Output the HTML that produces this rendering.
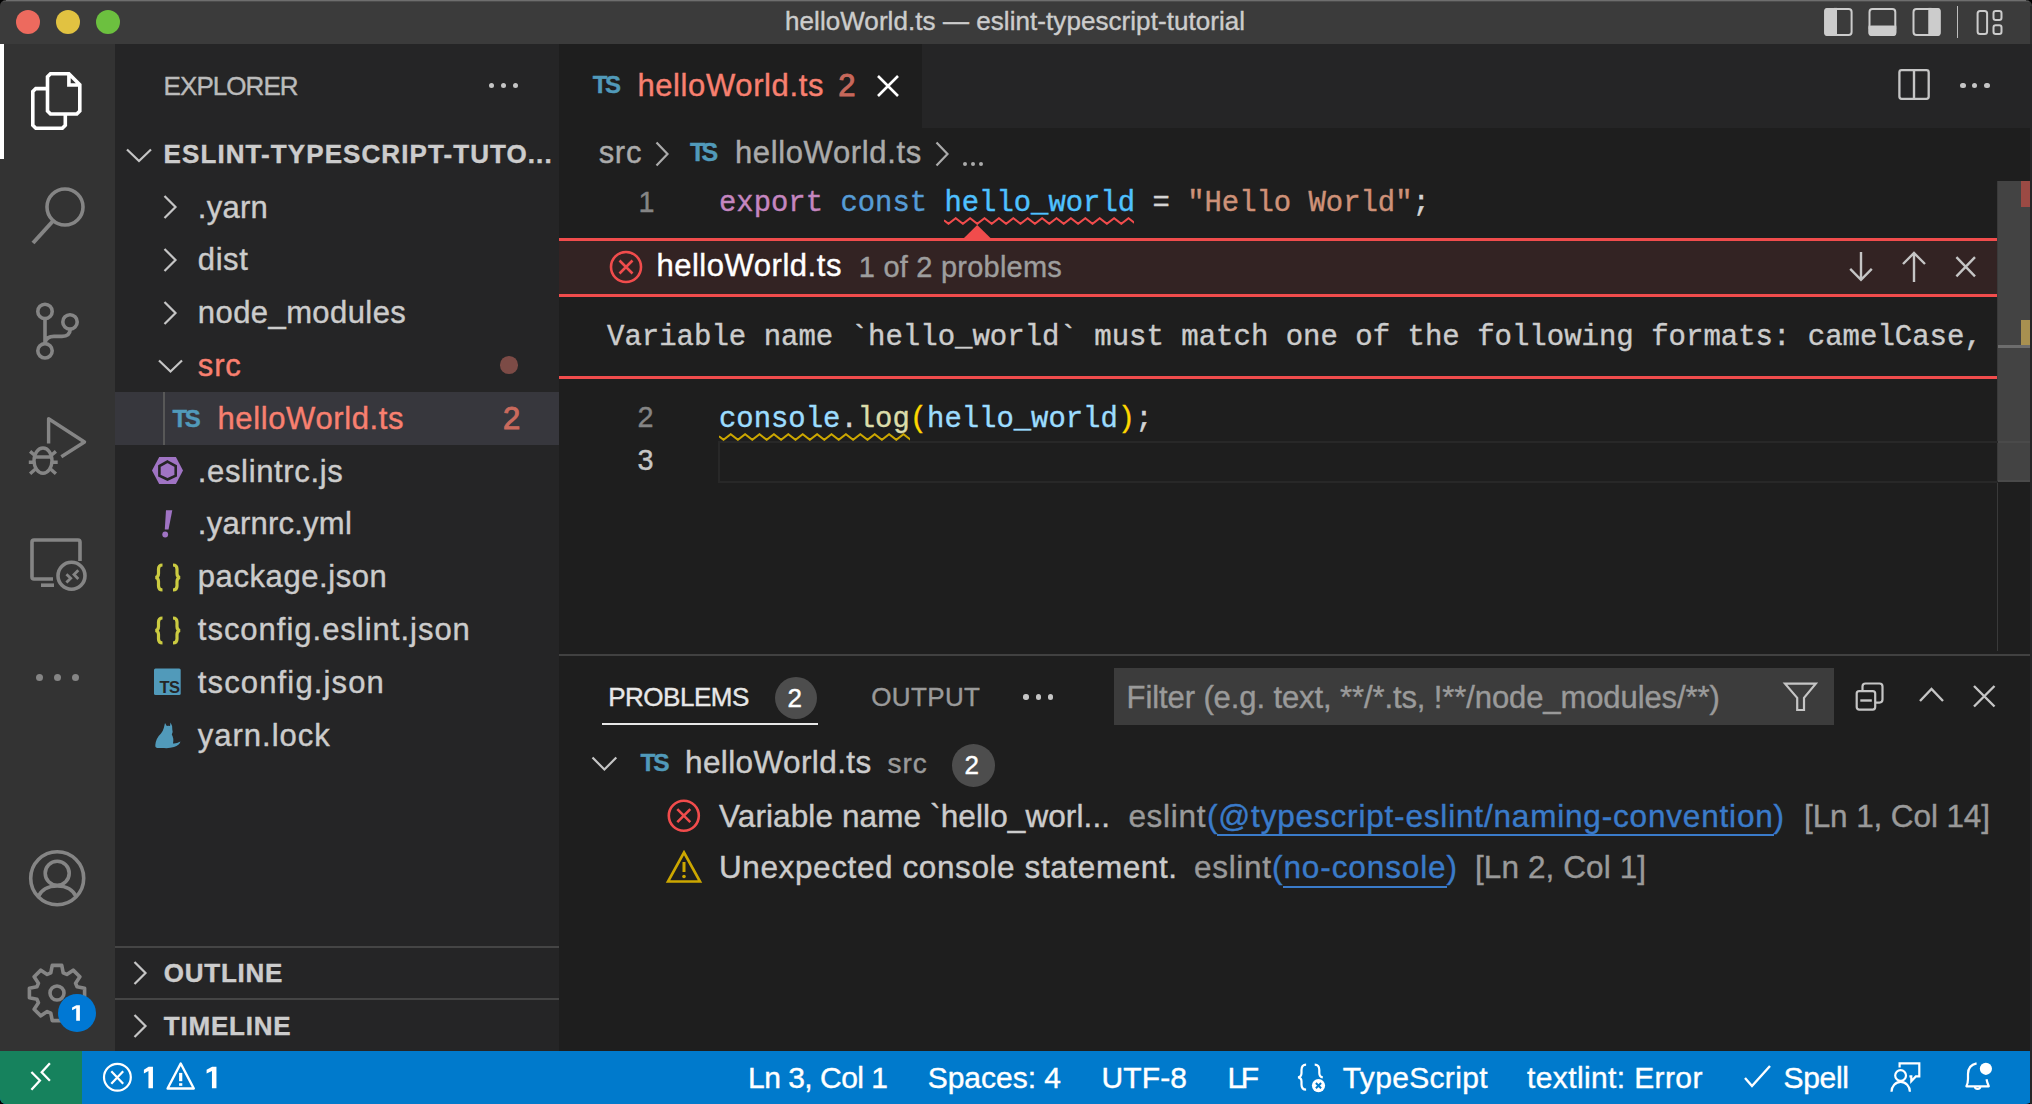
<!DOCTYPE html>
<html><head><meta charset="utf-8"><title>VS Code</title>
<style>
html,body{margin:0;padding:0;width:2032px;height:1104px;overflow:hidden;background:#000;}
body{position:relative;font-family:"Liberation Sans", sans-serif;}
.t{position:absolute;white-space:pre;-webkit-text-stroke:0.4px currentColor;}
.r{position:absolute;display:block;}
</style></head><body>
<div class="r" style="left:0px;top:0px;width:2032px;height:1104px;background:#1e1e1e;border-radius:6px;"></div>
<div class="r" style="left:0px;top:0px;width:2032px;height:44px;background:#3b3b3b;border-radius:6px 6px 0 0;"></div>
<div class="r" style="left:6px;top:0px;width:2020px;height:1px;background:#6e6e6e;"></div>
<div class="r" style="left:3px;top:1px;width:2026px;height:1px;background:#4c4c4c;"></div>
<div class="r" style="left:0px;top:44px;width:115px;height:1007px;background:#333333;"></div>
<div class="r" style="left:115px;top:44px;width:444px;height:1007px;background:#252526;"></div>
<div class="r" style="left:559px;top:44px;width:1473px;height:84px;background:#252526;"></div>
<div class="r" style="left:559px;top:44px;width:363px;height:84px;background:#1e1e1e;"></div>
<div class="r" style="left:0px;top:1051px;width:2032px;height:53px;background:#007acc;border-radius:0 0 6px 6px;"></div>
<div class="r" style="left:0px;top:1051px;width:82px;height:53px;background:#16825d;border-radius:0 0 0 6px;"></div>
<div class="r" style="left:2030px;top:44px;width:2px;height:1060px;background:#262626;"></div>
<div class="r" style="left:2030px;top:6px;width:2px;height:38px;background:#2c2c2c;"></div>
<div class="r" style="left:15.8px;top:9.8px;width:24.4px;height:24.4px;border-radius:50%;background:#ed6a5e"></div>
<div class="r" style="left:55.8px;top:9.8px;width:24.4px;height:24.4px;border-radius:50%;background:#e1c241"></div>
<div class="r" style="left:95.8px;top:9.8px;width:24.4px;height:24.4px;border-radius:50%;background:#6cc03f"></div>
<div class="t" style="left:785.00px;top:7.46px;font-size:26px;line-height:29.05px;color:#cccccc;letter-spacing:0.062px;">helloWorld.ts — eslint-typescript-tutorial</div>
<svg class="r" style="left:1822px;top:6px" width="34" height="34" viewBox="0 0 34 34"><rect x="3.2" y="2.9" width="26.4" height="26.1" rx="3" fill="none" stroke="#cccccc" stroke-width="2"/><rect x="2.2" y="1.9" width="12" height="28.1" rx="3" fill="#cccccc"/><rect x="12" y="1.9" width="3" height="28.1" fill="#cccccc"/></svg>
<svg class="r" style="left:1866px;top:6px" width="34" height="34" viewBox="0 0 34 34"><rect x="3.5" y="2.9" width="25.8" height="26.1" rx="3" fill="none" stroke="#cccccc" stroke-width="2"/><rect x="2.5" y="19.7" width="27.8" height="10.3" rx="3" fill="#cccccc"/><rect x="2.5" y="19.7" width="27.8" height="3" fill="#cccccc"/></svg>
<svg class="r" style="left:1910px;top:6px" width="34" height="34" viewBox="0 0 34 34"><rect x="3.5" y="2.9" width="26.1" height="26.1" rx="3" fill="none" stroke="#cccccc" stroke-width="2"/><rect x="18.5" y="1.9" width="12.1" height="28.1" rx="3" fill="#cccccc"/><rect x="18.5" y="1.9" width="3" height="28.1" fill="#cccccc"/></svg>
<div class="r" style="left:1956.8px;top:6px;width:1.5px;height:32px;background:#bdbdbd;"></div>
<svg class="r" style="left:1972px;top:6px" width="34" height="34" viewBox="0 0 34 34"><rect x="5.6" y="5" width="9.5" height="22.9" rx="2.5" fill="none" stroke="#cccccc" stroke-width="2"/><rect x="21.5" y="5" width="8" height="8.9" rx="2.2" fill="none" stroke="#cccccc" stroke-width="2"/><rect x="21.5" y="19.3" width="8" height="8.6" rx="2.2" fill="none" stroke="#cccccc" stroke-width="2"/></svg>
<div class="r" style="left:0px;top:44px;width:4px;height:115px;background:#ffffff;"></div>
<svg class="r" style="left:26px;top:66px" width="62" height="70" viewBox="0 0 62 70"><path d="M21.5 10.8 L24.5 7.8 H42.9 L53.8 18.7 V45 L50.8 48 H24.5 L21.5 45 Z M42.9 7.8 V19 H53.8" fill="none" stroke="#fff" stroke-width="3.6"/><path d="M21.5 22.6 H9.8 L6.8 25.6 V59.2 L9.8 62.2 H36.3 L39.3 59.2 V48" fill="none" stroke="#fff" stroke-width="3.6"/></svg>
<svg class="r" style="left:26px;top:180px" width="62" height="70" viewBox="0 0 62 70"><circle cx="39" cy="27" r="18" fill="none" stroke="#858585" stroke-width="3.6"/><path d="M27 41 L7 63" stroke="#858585" stroke-width="4"/></svg>
<svg class="r" style="left:26px;top:290px" width="62" height="72" viewBox="0 0 62 72"><circle cx="19" cy="21.4" r="7.2" fill="none" stroke="#858585" stroke-width="3.6"/><circle cx="19" cy="60.8" r="7.2" fill="none" stroke="#858585" stroke-width="3.6"/><circle cx="44" cy="31.9" r="7.2" fill="none" stroke="#858585" stroke-width="3.6"/><path d="M19 28.6 V54 M19 52.5 Q20.5 46.4 28 46.4 H36 Q44 46.4 44.3 39" fill="none" stroke="#858585" stroke-width="3.6"/></svg>
<svg class="r" style="left:26px;top:410px" width="62" height="70" viewBox="0 0 62 70"><path d="M22.6 33.4 V8.8 L58.5 32 L35.3 46.8" fill="none" stroke="#858585" stroke-width="3.4" stroke-linejoin="round"/><ellipse cx="17" cy="50.6" rx="9" ry="12.6" fill="none" stroke="#858585" stroke-width="3.4"/><path d="M8.5 47 H25.5 M4.1 41.4 L9.5 46 M29.9 41.4 L24.5 46 M2.8 52.2 H8 M26 52.2 H31.7 M4.1 63.8 L9.5 59 M29.9 63.8 L24.5 59" stroke="#858585" stroke-width="3.4" fill="none"/></svg>
<svg class="r" style="left:26px;top:530px" width="62" height="66" viewBox="0 0 62 66"><path d="M54 31 V12 q0 -2 -2 -2 H8 q-2 0 -2 2 V47 q0 2 2 2 H27" fill="none" stroke="#858585" stroke-width="3.6"/><path d="M15 55.2 H28" stroke="#858585" stroke-width="3.6"/><circle cx="45.5" cy="45.8" r="13.5" fill="none" stroke="#858585" stroke-width="3.6"/><path d="M40.4 44.3 L44.7 48.3 L40.4 52.6 M52.3 40.3 L48 44.6 L52.3 49" fill="none" stroke="#858585" stroke-width="2.8"/></svg>
<div class="r" style="left:35.5px;top:673.9px;width:7.4px;height:7.4px;border-radius:50%;background:#858585"></div>
<div class="r" style="left:53.699999999999996px;top:673.9px;width:7.4px;height:7.4px;border-radius:50%;background:#858585"></div>
<div class="r" style="left:71.8px;top:673.9px;width:7.4px;height:7.4px;border-radius:50%;background:#858585"></div>
<svg class="r" style="left:26px;top:846px" width="64" height="64" viewBox="0 0 64 64"><circle cx="31.2" cy="32.3" r="26.5" fill="none" stroke="#858585" stroke-width="3.6"/><circle cx="31.2" cy="27.3" r="12" fill="none" stroke="#858585" stroke-width="3.6"/><path d="M12 51 q5 -11 19.2 -11 q14.2 0 19.2 11" fill="none" stroke="#858585" stroke-width="3.6"/></svg>
<svg class="r" style="left:25px;top:961px" width="64" height="64" viewBox="0 0 64 64"><path d="M52.06 25.79 L59.60 27.26 L59.60 36.74 L52.06 38.21 L50.57 41.80 L54.86 48.16 L48.16 54.86 L41.80 50.57 L38.21 52.06 L36.74 59.60 L27.26 59.60 L25.79 52.06 L22.20 50.57 L15.84 54.86 L9.14 48.16 L13.43 41.80 L11.94 38.21 L4.40 36.74 L4.40 27.26 L11.94 25.79 L13.43 22.20 L9.14 15.84 L15.84 9.14 L22.20 13.43 L25.79 11.94 L27.26 4.40 L36.74 4.40 L38.21 11.94 L41.80 13.43 L48.16 9.14 L54.86 15.84 L50.57 22.20 Z" fill="none" stroke="#858585" stroke-width="3.6" stroke-linejoin="round"/><circle cx="32" cy="32" r="7" fill="none" stroke="#858585" stroke-width="3.6"/></svg>
<div class="r" style="left:58px;top:994px;width:38px;height:38px;border-radius:50%;background:#0078d4"></div>
<svg class="r" style="left:69px;top:1002px" width="14" height="22" viewBox="0 0 14 22"><path d="M10.899999999999991 3.2999999999999545 H7.400000000000003 L3.0999999999999943 5.4699999999999545 V8.197999999999954 L7.200000000000003 6.244999999999955 V18.799999999999955 H10.899999999999991 Z" fill="#ffffff"/></svg>
<div class="t" style="left:163.60px;top:72.46px;font-size:26px;line-height:29.05px;color:#bbbbbb;letter-spacing:-0.944px;">EXPLORER</div>
<div class="r" style="left:489.0px;top:82.8px;width:5.4px;height:5.4px;border-radius:50%;background:#c5c5c5"></div>
<div class="r" style="left:501.0px;top:82.8px;width:5.4px;height:5.4px;border-radius:50%;background:#c5c5c5"></div>
<div class="r" style="left:513.0999999999999px;top:82.8px;width:5.4px;height:5.4px;border-radius:50%;background:#c5c5c5"></div>
<svg class="r" style="left:125px;top:147px" width="28" height="18" viewBox="0 0 28 18"><path d="M2 2.5 L14.0 14.0 L26 2.5" fill="none" stroke="#c5c5c5" stroke-width="2.2"/></svg>
<div class="t" style="left:163.60px;top:140.46px;font-size:26px;line-height:29.05px;color:#cccccc;font-weight:700;letter-spacing:1.081px;">ESLINT-TYPESCRIPT-TUTO...</div>
<div class="r" style="left:115px;top:392px;width:444px;height:53px;background:#37373d;"></div>
<div class="r" style="left:163px;top:392px;width:2px;height:53px;background:#585858;"></div>
<svg class="r" style="left:162px;top:194.10000000000002px" width="18" height="27" viewBox="0 0 18 27"><path d="M2.5 2 L13.5 13 L2.5 24" fill="none" stroke="#c5c5c5" stroke-width="2.2"/></svg>
<div class="t" style="left:197.80px;top:190.54px;font-size:31px;line-height:34.63px;color:#cccccc;letter-spacing:0.273px;">.yarn</div>
<svg class="r" style="left:162px;top:246.89999999999998px" width="18" height="27" viewBox="0 0 18 27"><path d="M2.5 2 L13.5 13 L2.5 24" fill="none" stroke="#c5c5c5" stroke-width="2.2"/></svg>
<div class="t" style="left:197.80px;top:243.34px;font-size:31px;line-height:34.63px;color:#cccccc;letter-spacing:0.589px;">dist</div>
<svg class="r" style="left:162px;top:299.7px" width="18" height="27" viewBox="0 0 18 27"><path d="M2.5 2 L13.5 13 L2.5 24" fill="none" stroke="#c5c5c5" stroke-width="2.2"/></svg>
<div class="t" style="left:197.80px;top:296.14px;font-size:31px;line-height:34.63px;color:#cccccc;letter-spacing:0.425px;">node_modules</div>
<svg class="r" style="left:157px;top:358.0px" width="27" height="17" viewBox="0 0 27 17"><path d="M2 2.5 L13.5 13.5 L25 2.5" fill="none" stroke="#c5c5c5" stroke-width="2.2"/></svg>
<div class="t" style="left:197.80px;top:348.94px;font-size:31px;line-height:34.63px;color:#f88070;letter-spacing:0.836px;">src</div>
<div class="r" style="left:500.0px;top:356.2px;width:17.6px;height:17.6px;border-radius:50%;background:#7c4b46"></div>
<div class="t" style="left:172.40px;top:406.07px;font-size:24px;line-height:26.81px;color:#519aba;font-weight:700;letter-spacing:-2.272px;">TS</div>
<div class="t" style="left:217.50px;top:401.74px;font-size:31px;line-height:34.63px;color:#f88070;letter-spacing:0.617px;">helloWorld.ts</div>
<div class="t" style="left:503.00px;top:401.74px;font-size:31px;line-height:34.63px;color:#c96a5d;-webkit-text-stroke:1px currentColor;">2</div>
<div class="t" style="left:197.80px;top:454.54px;font-size:31px;line-height:34.63px;color:#cccccc;letter-spacing:0.655px;">.eslintrc.js</div>
<div class="t" style="left:197.80px;top:507.34px;font-size:31px;line-height:34.63px;color:#cccccc;letter-spacing:0.244px;">.yarnrc.yml</div>
<div class="t" style="left:197.80px;top:560.14px;font-size:31px;line-height:34.63px;color:#cccccc;letter-spacing:0.578px;">package.json</div>
<div class="t" style="left:197.80px;top:612.94px;font-size:31px;line-height:34.63px;color:#cccccc;letter-spacing:0.987px;">tsconfig.eslint.json</div>
<div class="t" style="left:197.80px;top:665.74px;font-size:31px;line-height:34.63px;color:#cccccc;letter-spacing:1.143px;">tsconfig.json</div>
<div class="t" style="left:197.80px;top:718.54px;font-size:31px;line-height:34.63px;color:#cccccc;letter-spacing:0.996px;">yarn.lock</div>
<svg class="r" style="left:150px;top:455px" width="35" height="31" viewBox="0 0 35 31"><path d="M2 15.6 L9.2 2.1 H25.9 L33 15.6 L25.9 29.1 H9.2 Z" fill="#a074c4"/><path d="M17.5 6.6 L25.7 11 V20.7 L17.5 24.5 L9.4 20.7 V11 Z" fill="#a074c4" stroke="#252526" stroke-width="2.6"/></svg>
<svg class="r" style="left:158px;top:508px" width="18" height="32" viewBox="0 0 18 32"><path d="M8 2.3 H14.3 L10.5 21.5 H6.8 Z" fill="#a074c4"/><circle cx="7.2" cy="26.5" r="2.9" fill="#a074c4"/></svg>
<svg class="r" style="left:152px;top:562px" width="32" height="32" viewBox="0 0 32 32"><path d="M10.5 3 Q6.5 3 6.5 7 V11.5 Q6.5 15 3.5 15.5 Q6.5 16 6.5 19.5 V24 Q6.5 28 10.5 28 M21 3 Q25 3 25 7 V11.5 Q25 15 28 15.5 Q25 16 25 19.5 V24 Q25 28 21 28" fill="none" stroke="#cbcb41" stroke-width="3.2"/></svg>
<svg class="r" style="left:152px;top:615px" width="32" height="32" viewBox="0 0 32 32"><path d="M10.5 3 Q6.5 3 6.5 7 V11.5 Q6.5 15 3.5 15.5 Q6.5 16 6.5 19.5 V24 Q6.5 28 10.5 28 M21 3 Q25 3 25 7 V11.5 Q25 15 28 15.5 Q25 16 25 19.5 V24 Q25 28 21 28" fill="none" stroke="#cbcb41" stroke-width="3.2"/></svg>
<svg class="r" style="left:153px;top:667px" width="29" height="29" viewBox="0 0 29 29"><rect x="1" y="1.5" width="26.7" height="26.5" rx="1.5" fill="#519aba"/><text x="6.5" y="25.6" font-family="Liberation Sans" font-weight="700" font-size="16.5" fill="#252526" letter-spacing="-0.6">TS</text></svg>
<svg class="r" style="left:152px;top:720px" width="30" height="30" viewBox="0 0 30 30"><path d="M13 3 L14.8 6 Q16.5 5.4 18 6 L18.5 2.5 Q20.8 6 20.3 9.5 Q21.3 12 19.8 14.5 Q22 18 21 23.5 Q24 24 28.5 21.5 Q27.5 25 22 27 Q17 28.5 12 28 H5 Q2.8 27.5 3.3 25 Q4 18 9 13.5 Q11 11 11.8 8 Z" fill="#519aba"/></svg>
<div class="r" style="left:115px;top:946px;width:444px;height:2px;background:#454545;"></div>
<div class="r" style="left:115px;top:998px;width:444px;height:2px;background:#454545;"></div>
<svg class="r" style="left:132px;top:959.5px" width="18" height="27" viewBox="0 0 18 27"><path d="M2.5 2 L13.5 13 L2.5 24" fill="none" stroke="#c5c5c5" stroke-width="2.2"/></svg>
<div class="t" style="left:163.80px;top:958.96px;font-size:26px;line-height:29.05px;color:#cccccc;font-weight:700;letter-spacing:0.751px;">OUTLINE</div>
<svg class="r" style="left:132px;top:1012.5px" width="18" height="27" viewBox="0 0 18 27"><path d="M2.5 2 L13.5 13 L2.5 24" fill="none" stroke="#c5c5c5" stroke-width="2.2"/></svg>
<div class="t" style="left:163.80px;top:1012.46px;font-size:26px;line-height:29.05px;color:#cccccc;font-weight:700;letter-spacing:0.784px;">TIMELINE</div>
<div class="t" style="left:592.80px;top:72.37px;font-size:24px;line-height:26.81px;color:#519aba;font-weight:700;letter-spacing:-2.372px;">TS</div>
<div class="t" style="left:637.40px;top:69.44px;font-size:31px;line-height:34.63px;color:#f88070;letter-spacing:0.617px;">helloWorld.ts</div>
<div class="t" style="left:838.20px;top:69.44px;font-size:31px;line-height:34.63px;color:#c7685b;-webkit-text-stroke:1px currentColor;">2</div>
<svg class="r" style="left:874px;top:72px" width="28" height="28" viewBox="0 0 28 28"><path d="M4 4 L24 24 M24 4 L4 24" stroke="#ffffff" stroke-width="2.6"/></svg>
<svg class="r" style="left:1896px;top:66px" width="36" height="37" viewBox="0 0 36 37"><rect x="3.4" y="4.2" width="29.3" height="28.6" rx="2.2" fill="none" stroke="#c5c5c5" stroke-width="2.3"/><path d="M18 4.2 V32.8" stroke="#c5c5c5" stroke-width="2.4"/></svg>
<div class="r" style="left:1960.4px;top:82.9px;width:5.2px;height:5.2px;border-radius:50%;background:#c5c5c5"></div>
<div class="r" style="left:1972.2px;top:82.9px;width:5.2px;height:5.2px;border-radius:50%;background:#c5c5c5"></div>
<div class="r" style="left:1984.4px;top:82.9px;width:5.2px;height:5.2px;border-radius:50%;background:#c5c5c5"></div>
<div class="t" style="left:598.70px;top:136.34px;font-size:31px;line-height:34.63px;color:#ababab;letter-spacing:0.686px;">src</div>
<svg class="r" style="left:654px;top:140px" width="18" height="28" viewBox="0 0 18 28"><path d="M2.5 2.5 L13.5 14 L2.5 25.5" fill="none" stroke="#ababab" stroke-width="2.2"/></svg>
<div class="t" style="left:690.00px;top:139.37px;font-size:25px;line-height:27.93px;color:#519aba;font-weight:700;letter-spacing:-3.837px;">TS</div>
<div class="t" style="left:734.90px;top:136.34px;font-size:31px;line-height:34.63px;color:#ababab;letter-spacing:0.642px;">helloWorld.ts</div>
<svg class="r" style="left:934px;top:140px" width="18" height="28" viewBox="0 0 18 28"><path d="M2.5 2.5 L13.5 14 L2.5 25.5" fill="none" stroke="#ababab" stroke-width="2.2"/></svg>
<div class="r" style="left:962.9000000000001px;top:161.7px;width:4.6px;height:4.6px;border-radius:50%;background:#ababab"></div>
<div class="r" style="left:970.7px;top:161.7px;width:4.6px;height:4.6px;border-radius:50%;background:#ababab"></div>
<div class="r" style="left:978.5px;top:161.7px;width:4.6px;height:4.6px;border-radius:50%;background:#ababab"></div>
<div class="r" style="left:1998px;top:181px;width:32px;height:301px;background:#434343;"></div>
<div class="r" style="left:1997px;top:181px;width:1px;height:470px;background:#3a3a3a;"></div>
<div class="r" style="left:2020.6px;top:181px;width:9.400000000000091px;height:26.400000000000006px;background:#9b4a44;"></div>
<div class="r" style="left:2020.6px;top:319.6px;width:9.400000000000091px;height:25.399999999999977px;background:#a89050;"></div>
<div class="r" style="left:1998px;top:345px;width:32px;height:3px;background:#6d6d6d;"></div>
<div class="r" style="left:718px;top:440.5px;width:1278px;height:38px;border:2px solid #282828;border-right:none;"></div>
<div class="r" style="left:1998px;top:441px;width:32px;height:2px;background:#4a4a4a;"></div>
<div class="r" style="left:1998px;top:480px;width:32px;height:2px;background:#4a4a4a;"></div>
<div class="t" style="left:638.50px;top:185.72px;font-size:28.8px;line-height:32.62px;color:#858585;font-family:"Liberation Mono", monospace;">1</div>
<div class="t" style="left:637.50px;top:401.32px;font-size:28.8px;line-height:32.62px;color:#858585;font-family:"Liberation Mono", monospace;">2</div>
<div class="t" style="left:637.50px;top:444.32px;font-size:28.8px;line-height:32.62px;color:#c6c6c6;font-family:"Liberation Mono", monospace;">3</div>
<div class="t" style="left:719px;top:188.14px;font-family:'Liberation Mono', monospace;font-size:28.9px;line-height:32.74px;"><span style="color:#c586c0">export</span><span style="color:#d4d4d4"> </span><span style="color:#569cd6">const</span><span style="color:#d4d4d4"> </span><span style="color:#4fc1ff">hello_world</span><span style="color:#d4d4d4"> = </span><span style="color:#ce9178">&quot;Hello World&quot;</span><span style="color:#d4d4d4">;</span></div>
<svg class="r" style="left:944px;top:216.5px" width="190" height="8" viewBox="0 0 190 8"><path d="M0 3.2 L4.5 6.8 L11.70 1.2 L18.90 6.8 L26.10 1.2 L33.30 6.8 L40.50 1.2 L47.70 6.8 L54.90 1.2 L62.10 6.8 L69.30 1.2 L76.50 6.8 L83.70 1.2 L90.90 6.8 L98.10 1.2 L105.30 6.8 L112.50 1.2 L119.70 6.8 L126.90 1.2 L134.10 6.8 L141.30 1.2 L148.50 6.8 L155.70 1.2 L162.90 6.8 L170.10 1.2 L177.30 6.8 L184.50 1.2 L191.70 6.8 " fill="none" stroke="#f14c4c" stroke-width="2"/></svg>
<div class="t" style="left:719px;top:403.74px;font-family:'Liberation Mono', monospace;font-size:28.9px;line-height:32.74px;"><span style="color:#9cdcfe">console</span><span style="color:#d4d4d4">.</span><span style="color:#dcdcaa">log</span><span style="color:#ffd700">(</span><span style="color:#9cdcfe">hello_world</span><span style="color:#ffd700">)</span><span style="color:#d4d4d4">;</span></div>
<svg class="r" style="left:719px;top:432.5px" width="191" height="8" viewBox="0 0 191 8"><path d="M0 3.2 L4.5 6.8 L11.70 1.2 L18.90 6.8 L26.10 1.2 L33.30 6.8 L40.50 1.2 L47.70 6.8 L54.90 1.2 L62.10 6.8 L69.30 1.2 L76.50 6.8 L83.70 1.2 L90.90 6.8 L98.10 1.2 L105.30 6.8 L112.50 1.2 L119.70 6.8 L126.90 1.2 L134.10 6.8 L141.30 1.2 L148.50 6.8 L155.70 1.2 L162.90 6.8 L170.10 1.2 L177.30 6.8 L184.50 1.2 L191.70 6.8 " fill="none" stroke="#cca700" stroke-width="2"/></svg>
<svg class="r" style="left:963px;top:224px" width="29" height="15" viewBox="0 0 29 15"><path d="M0.5 14.5 L14.2 1 L28 14.5 Z" fill="#f14c4c"/></svg>
<div class="r" style="left:559px;top:238px;width:1438px;height:2.5px;background:#f14c4c;"></div>
<div class="r" style="left:559px;top:240.5px;width:1438px;height:53.5px;background:#332323;"></div>
<div class="r" style="left:559px;top:294px;width:1438px;height:2.5px;background:#f14c4c;"></div>
<div class="r" style="left:559px;top:376px;width:1438px;height:2.5px;background:#f14c4c;"></div>
<svg class="r" style="left:608px;top:249px" width="36" height="36" viewBox="0 0 36 36"><circle cx="18" cy="18" r="15" fill="none" stroke="#f14c4c" stroke-width="2.6"/><path d="M11.5 11.5 L24.5 24.5 M24.5 11.5 L11.5 24.5" stroke="#f14c4c" stroke-width="2.6"/></svg>
<div class="t" style="left:656.40px;top:249.14px;font-size:31px;line-height:34.63px;color:#ffffff;letter-spacing:0.534px;">helloWorld.ts</div>
<div class="t" style="left:858.80px;top:250.95px;font-size:29px;line-height:32.40px;color:#9e9e9e;letter-spacing:0.223px;">1 of 2 problems</div>
<svg class="r" style="left:1845px;top:250px" width="34" height="34" viewBox="0 0 34 34"><path d="M16 2 V29.8 M5.2 18.8 L16 29.8 L26.8 18.8" fill="none" stroke="#c5c5c5" stroke-width="2.4"/></svg>
<svg class="r" style="left:1898px;top:250px" width="34" height="34" viewBox="0 0 34 34"><path d="M16 3 V32 M5 14 L16 3 L27 14" fill="none" stroke="#c5c5c5" stroke-width="2.4"/></svg>
<svg class="r" style="left:1950px;top:252px" width="32" height="30" viewBox="0 0 32 30"><path d="M6.4 5.2 L25 24.3 M25 5.2 L6.4 24.3" stroke="#c5c5c5" stroke-width="2.4"/></svg>
<div class="t" style="left:607px;top:321.66px;font-family:'Liberation Mono', monospace;font-size:29.0px;line-height:32.85px;"><span style="color:#cccccc">Variable name `hello_world` must match one of the following formats: camelCase,</span></div>
<div class="r" style="left:559px;top:654px;width:1471px;height:2px;background:#414141;"></div>
<div class="t" style="left:608.20px;top:683.46px;font-size:26px;line-height:29.05px;color:#e7e7e7;letter-spacing:-0.469px;">PROBLEMS</div>
<div class="r" style="left:775.3px;top:676.7px;width:42px;height:42px;border-radius:50%;background:#4d4d4d"></div>
<div class="t" style="left:787.50px;top:683.96px;font-size:26px;line-height:29.05px;color:#ffffff;">2</div>
<div class="r" style="left:602px;top:722.5px;width:216px;height:2.0px;background:#e7e7e7;"></div>
<div class="t" style="left:871.20px;top:683.46px;font-size:26px;line-height:29.05px;color:#9a9a9a;letter-spacing:0.385px;">OUTPUT</div>
<div class="r" style="left:1023.3px;top:694.3px;width:5.4px;height:5.4px;border-radius:50%;background:#c5c5c5"></div>
<div class="r" style="left:1035.8px;top:694.3px;width:5.4px;height:5.4px;border-radius:50%;background:#c5c5c5"></div>
<div class="r" style="left:1047.7px;top:694.3px;width:5.4px;height:5.4px;border-radius:50%;background:#c5c5c5"></div>
<div class="r" style="left:1114px;top:668px;width:720px;height:57px;background:#3c3c3c;"></div>
<div class="t" style="left:1126.60px;top:680.74px;font-size:31px;line-height:34.63px;color:#9a9a9a;letter-spacing:-0.101px;">Filter (e.g. text, **/*.ts, !**/node_modules/**)</div>
<svg class="r" style="left:1780px;top:678px" width="40" height="38" viewBox="0 0 40 38"><path d="M5 5.6 H35.8 L24 19.8 V32 H17.2 V19.8 Z" fill="none" stroke="#c5c5c5" stroke-width="2.2" stroke-linejoin="miter"/></svg>
<svg class="r" style="left:1852px;top:679px" width="36" height="36" viewBox="0 0 36 36"><path d="M10.5 12.1 V7.5 q0 -3 3 -3 H27.5 q3 0 3 3 V20.6 q0 3 -3 3 H23.2" fill="none" stroke="#c5c5c5" stroke-width="2.2"/><rect x="4.7" y="12.1" width="18.5" height="18.5" rx="2.5" fill="none" stroke="#c5c5c5" stroke-width="2.2"/><path d="M8.3 21.5 H19.8" stroke="#c5c5c5" stroke-width="2.4"/></svg>
<svg class="r" style="left:1917px;top:684px" width="30" height="22" viewBox="0 0 30 22"><path d="M3 17 L14.5 5 L26 17" fill="none" stroke="#c5c5c5" stroke-width="2.4"/></svg>
<svg class="r" style="left:1970px;top:682px" width="29" height="29" viewBox="0 0 29 29"><path d="M4 4 L24.5 24.5 M24.5 4 L4 24.5" stroke="#c5c5c5" stroke-width="2.4"/></svg>
<svg class="r" style="left:590px;top:755px" width="30" height="18" viewBox="0 0 30 18"><path d="M2.5 2.5 L14.4 14.5 L26.3 2.5" fill="none" stroke="#c5c5c5" stroke-width="2.2"/></svg>
<div class="t" style="left:640.60px;top:749.12px;font-size:24.5px;line-height:27.37px;color:#519aba;font-weight:700;letter-spacing:-2.312px;">TS</div>
<div class="t" style="left:685.00px;top:744.88px;font-size:31.5px;line-height:35.19px;color:#cccccc;letter-spacing:0.393px;">helloWorld.ts</div>
<div class="t" style="left:887.50px;top:748.05px;font-size:28px;line-height:31.28px;color:#9a9a9a;letter-spacing:0.936px;">src</div>
<div class="r" style="left:951.7px;top:743.7px;width:43.2px;height:43.2px;border-radius:50%;background:#4d4d4d"></div>
<div class="t" style="left:964.50px;top:751.46px;font-size:26px;line-height:29.05px;color:#ffffff;">2</div>
<svg class="r" style="left:665px;top:797px" width="38" height="38" viewBox="0 0 38 38"><circle cx="18.8" cy="18.7" r="15" fill="none" stroke="#f14c4c" stroke-width="2.6"/><path d="M12.3 12.2 L25.3 25.2 M25.3 12.2 L12.3 25.2" stroke="#f14c4c" stroke-width="2.6"/></svg>
<div class="t" style="left:719.00px;top:798.88px;font-size:31.5px;line-height:35.19px;color:#cccccc;letter-spacing:0.109px;">Variable name `hello_worl...</div>
<div class="t" style="left:1128.40px;top:798.88px;font-size:31.5px;line-height:35.19px;color:#9a9a9a;letter-spacing:0.694px;">eslint</div>
<div class="t" style="left:1207.00px;top:798.88px;font-size:31.5px;line-height:35.19px;color:#3a7bca;letter-spacing:0.821px;">(@typescript-eslint/naming-convention)</div>
<div class="r" style="left:1217px;top:834px;width:557px;height:2px;background:#3a7bca;"></div>
<div class="t" style="left:1804.00px;top:798.88px;font-size:31.5px;line-height:35.19px;color:#9a9a9a;letter-spacing:-0.103px;">[Ln 1, Col 14]</div>
<svg class="r" style="left:664px;top:849px" width="40" height="36" viewBox="0 0 40 36"><path d="M20 3.5 L36 32.5 H4 Z" fill="none" stroke="#cca700" stroke-width="2.6" stroke-linejoin="miter"/><path d="M20 13 V23" stroke="#cca700" stroke-width="3"/><circle cx="20" cy="27.5" r="1.8" fill="#cca700"/></svg>
<div class="t" style="left:719.00px;top:850.28px;font-size:31.5px;line-height:35.19px;color:#cccccc;letter-spacing:0.600px;">Unexpected console statement.</div>
<div class="t" style="left:1194.00px;top:850.28px;font-size:31.5px;line-height:35.19px;color:#9a9a9a;letter-spacing:0.694px;">eslint</div>
<div class="t" style="left:1272.00px;top:850.28px;font-size:31.5px;line-height:35.19px;color:#3a7bca;letter-spacing:0.905px;">(no-console)</div>
<div class="r" style="left:1283px;top:885.5px;width:164px;height:2.0px;background:#3a7bca;"></div>
<div class="t" style="left:1475.00px;top:850.28px;font-size:31.5px;line-height:35.19px;color:#9a9a9a;letter-spacing:0.098px;">[Ln 2, Col 1]</div>
<svg class="r" style="left:26px;top:1058px" width="30" height="36" viewBox="0 0 30 36"><path d="M5.4 14 L13.9 22.5 L5.4 31.8 M23.9 5.3 L15.7 14.2 L23.9 22.7" fill="none" stroke="#ffffff" stroke-width="2.3"/></svg>
<svg class="r" style="left:100px;top:1060px" width="36" height="36" viewBox="0 0 36 36"><circle cx="17.4" cy="17.2" r="13.4" fill="none" stroke="#ffffff" stroke-width="2.2"/><path d="M11.3 11.3 L23.2 23.8 M23.2 11.3 L11.3 23.8" stroke="#ffffff" stroke-width="2.2"/></svg>
<svg class="r" style="left:140px;top:1063px" width="16" height="29" viewBox="0 0 16 29"><path d="M12.949999999999989 3.7999999999999545 H8.649999999999988 L3.9000000000000057 6.809999999999954 V10.593999999999955 L8.449999999999989 7.8849999999999545 V25.299999999999955 H12.949999999999989 Z" fill="#ffffff"/></svg>
<svg class="r" style="left:164px;top:1058px" width="34" height="34" viewBox="0 0 34 34"><path d="M16.7 5.5 L29.8 30.5 H3.6 Z" fill="none" stroke="#ffffff" stroke-width="2.4" stroke-linejoin="round"/><path d="M16.7 14.9 V23.2" stroke="#ffffff" stroke-width="3.2"/><rect x="15.1" y="25.2" width="3.2" height="2.6" fill="#ffffff"/></svg>
<svg class="r" style="left:203px;top:1063px" width="17" height="29" viewBox="0 0 17 29"><path d="M13.449999999999989 3.7999999999999545 H9.149999999999988 L3.5999999999999943 6.809999999999954 V10.593999999999955 L8.949999999999989 7.8849999999999545 V25.299999999999955 H13.449999999999989 Z" fill="#ffffff"/></svg>
<div class="t" style="left:748.00px;top:1060.84px;font-size:30px;line-height:33.52px;color:#ffffff;letter-spacing:-0.509px;">Ln 3, Col 1</div>
<div class="t" style="left:927.70px;top:1060.84px;font-size:30px;line-height:33.52px;color:#ffffff;letter-spacing:-0.015px;">Spaces: 4</div>
<div class="t" style="left:1101.60px;top:1060.84px;font-size:30px;line-height:33.52px;color:#ffffff;letter-spacing:0.075px;">UTF-8</div>
<div class="t" style="left:1227.50px;top:1060.84px;font-size:30px;line-height:33.52px;color:#ffffff;letter-spacing:-3.516px;">LF</div>
<svg class="r" style="left:1294px;top:1060px" width="36" height="36" viewBox="0 0 36 36"><path d="M12.1 4.6 Q7.5 4.6 7.5 10 V13 Q7.5 17 4 17.3 Q7.5 17.6 7.5 21.5 V24.5 Q7.5 29.7 12.1 29.7 M20.7 4.6 Q25.3 4.6 25.3 10 V13 Q25.3 17 28.8 17.3" fill="none" stroke="#ffffff" stroke-width="2.2"/><circle cx="24.5" cy="25.6" r="6.6" fill="#ffffff"/><path d="M21.9 23 L27.1 28.2 M27.1 23 L21.9 28.2" stroke="#007acc" stroke-width="2"/></svg>
<div class="t" style="left:1342.80px;top:1060.84px;font-size:30px;line-height:33.52px;color:#ffffff;letter-spacing:0.330px;">TypeScript</div>
<div class="t" style="left:1527.00px;top:1060.84px;font-size:30px;line-height:33.52px;color:#ffffff;letter-spacing:0.385px;">textlint: Error</div>
<svg class="r" style="left:1742px;top:1062px" width="32" height="30" viewBox="0 0 32 30"><path d="M3 16 L10 24 L28 4" fill="none" stroke="#ffffff" stroke-width="2.4"/></svg>
<div class="t" style="left:1783.60px;top:1060.84px;font-size:30px;line-height:33.52px;color:#ffffff;letter-spacing:-0.334px;">Spell</div>
<svg class="r" style="left:1886px;top:1058px" width="38" height="38" viewBox="0 0 38 38"><circle cx="14.6" cy="17.5" r="5.4" fill="none" stroke="#ffffff" stroke-width="2.2"/><path d="M5.5 33.8 A9.2 9.9 0 0 1 23.9 33.8" fill="none" stroke="#ffffff" stroke-width="2.2"/><path d="M13.6 9.5 V5.3 H33.3 V18.4 H29.8 L25.3 23.2 V18.4 H23.4" fill="none" stroke="#ffffff" stroke-width="2.2"/></svg>
<svg class="r" style="left:1962px;top:1058px" width="38" height="38" viewBox="0 0 38 38"><path d="M14.6 5.3 Q6 7 6 16 V21 Q6 25 4.4 28.3 H26.8 Q25.2 25 24.5 21.3" fill="none" stroke="#ffffff" stroke-width="2.2" stroke-linejoin="round"/><path d="M12.8 28.3 A2.8 2.8 0 0 0 18.4 28.3" fill="none" stroke="#ffffff" stroke-width="2"/><circle cx="23.9" cy="10.8" r="6.1" fill="#ffffff"/></svg>
</body></html>
